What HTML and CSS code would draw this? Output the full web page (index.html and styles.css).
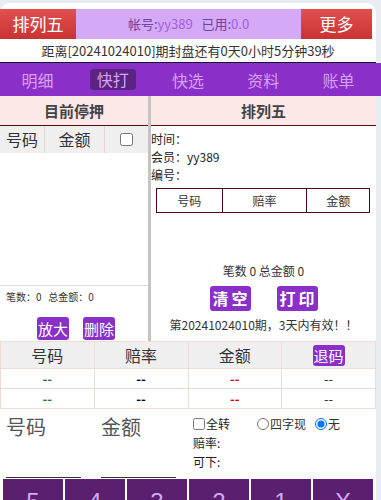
FILE: index.html
```html
<!DOCTYPE html>
<html lang="zh">
<head>
    <meta charset="UTF-8">
    <meta name="viewport" content="width=device-width, initial-scale=1.0">
    <title>排列五 快打</title>
    <link rel="stylesheet" href="styles.css">
</head>
<body>
    <div class="app">
        <!-- 顶部栏 -->
        <div class="top-bar">
            <div class="red-btn">排列五</div>
            <div class="account">帐号:<span>yy389</span>&nbsp;&nbsp;&nbsp;已用:<span>0.0</span></div>
            <div class="red-btn">更多</div>
        </div>
        <div class="countdown">距离[20241024010]期封盘还有0天0小时5分钟39秒</div>

        <!-- 导航 -->
        <div class="nav">
            <div class="nav-item">明细</div>
            <div class="nav-item"><span class="active">快打</span></div>
            <div class="nav-item">快选</div>
            <div class="nav-item">资料</div>
            <div class="nav-item">账单</div>
        </div>

        <!-- 双列 -->
        <div class="dual">
            <div class="left-col">
                <div class="col-header">目前停押</div>
                <div class="bet-head">
                    <div class="c1">号码</div>
                    <div class="c2">金额</div>
                    <div class="c3"><input type="checkbox"></div>
                </div>
                <div class="bet-body"></div>
                <div class="left-stats">笔数：0 &nbsp;&nbsp;总金额：0</div>
                <div class="left-btns">
                    <span class="p-btn">放大</span>
                    <span class="p-btn">删除</span>
                </div>
            </div>
            <div class="right-col">
                <div class="col-header">排列五</div>
                <div class="info">
                    <p>时间：</p>
                    <p>会员：yy389</p>
                    <p>编号：</p>
                </div>
                <table class="ticket">
                    <tr><td class="t1">号码</td><td class="t2">赔率</td><td class="t3">金额</td></tr>
                </table>
                <div class="right-stats">笔数 0 总金额 0</div>
                <div class="right-btns">
                    <span class="big-btn">清空</span>
                    <span class="big-btn">打印</span>
                </div>
                <div class="notice">第20241024010期，3天内有效！！</div>
            </div>
        </div>

        <!-- 下注列表 -->
        <table class="odds">
            <tr class="head"><td>号码</td><td>赔率</td><td>金额</td><td><span class="p-btn">退码</span></td></tr>
            <tr><td class="green">--</td><td class="black">--</td><td class="red">--</td><td class="plain">--</td></tr>
            <tr><td class="green">--</td><td class="black">--</td><td class="red">--</td><td class="plain">--</td></tr>
        </table>

        <!-- 输入区 -->
        <div class="entry">
            <div class="field">
                <div class="field-label">号码</div>
                <div class="field-line"></div>
            </div>
            <div class="field">
                <div class="field-label">金额</div>
                <div class="field-line"></div>
            </div>
            <div class="options">
                <label class="opt"><input type="checkbox">全转</label>
                <div class="opt-line">赔率:</div>
                <div class="opt-line">可下:</div>
            </div>
            <div class="radios">
                <label class="opt"><input type="radio" name="mode">四字现</label>
                <label class="opt"><input type="radio" name="mode" checked>无</label>
            </div>
        </div>

        <!-- 键盘 -->
        <div class="keypad">
            <div class="key">5</div>
            <div class="key">4</div>
            <div class="key">3</div>
            <div class="key">2</div>
            <div class="key">1</div>
            <div class="key">X</div>
        </div>
    </div>
</body>
</html>
```

FILE: styles.css
```css
/* 全局 */
body {
    margin: 0;
    background-color: #e9edf2;
    font-family: 'Noto Sans CJK SC', 'Liberation Sans', sans-serif;
    color: #333;
    overflow: hidden;
}

.app {
    width: 376px;
    margin-top: 3px;
    padding-top: 6px;
    background: white;
    border-radius: 10px 10px 0 0;
}

/* 顶部栏 */
.top-bar {
    display: flex;
    height: 30px;
    margin-right: 4px;
}

.red-btn {
    width: 76px;
    background: linear-gradient(#e25050, #c93232);
    color: white;
    font-size: 17px;
    line-height: 30px;
    text-align: center;
}

.top-bar .red-btn:last-child {
    width: 71px;
}

.account {
    flex: 1;
    background-color: #d4a9f5;
    color: #7242a0;
    font-size: 13px;
    line-height: 30px;
    text-align: center;
}

.account span {
    color: #a65ae8;
}

.countdown {
    height: 23px;
    line-height: 23px;
    font-size: 13px;
    text-align: center;
    color: #333;
    border-bottom: 1px solid #1a1030;
}

/* 导航 */
.nav {
    display: flex;
    height: 33px;
    background-color: #8a2fc8;
    margin-right: -5px;
    padding-right: 5px;
}

.nav-item {
    flex: 1;
    display: flex;
    justify-content: center;
    align-items: center;
    color: #d5a3f3;
    font-size: 16px;
}

.nav-item .active {
    background-color: #5b2482;
    border-radius: 4px;
    padding: 0 7px;
    line-height: 21px;
}

/* 双列 */
.dual {
    display: flex;
    height: 245px;
}

.left-col {
    width: 148px;
    border-right: 3px solid #c4c4c4;
    display: flex;
    flex-direction: column;
}

.right-col {
    flex: 1;
    display: flex;
    flex-direction: column;
}

.col-header {
    height: 29px;
    line-height: 29px;
    background-color: #fde8e8;
    border-bottom: 1px solid #5a0a0a;
    text-align: center;
    font-weight: bold;
    font-size: 15px;
    color: #444;
}

.bet-head {
    display: flex;
    height: 27px;
    background-color: #efefef;
    font-size: 16px;
    line-height: 27px;
    text-align: center;
}

.bet-head .c1 {
    width: 44px;
    border-right: 1px solid #e6d8d0;
}

.bet-head .c2 {
    width: 59px;
    border-right: 1px solid #e6d8d0;
}

.bet-head .c3 {
    flex: 1;
    display: flex;
    justify-content: center;
    align-items: center;
}

.bet-head input {
    margin: 0;
}

.bet-body {
    height: 132px;
    border-bottom: 1px solid #ddd;
}

.left-stats {
    font-size: 10px;
    padding-left: 6px;
    line-height: 22px;
    height: 24px;
}

.left-btns {
    display: flex;
    gap: 14px;
    padding-left: 37px;
    margin-top: 7px;
}

.p-btn {
    display: inline-block;
    background-color: #8a2fc8;
    color: white;
    font-size: 15px;
    line-height: 23px;
    padding: 0 1px;
    border-radius: 3px;
}

.info {
    padding-top: 4px;
    font-size: 12px;
    color: #222;
}

.info p {
    margin: 0;
    line-height: 18px;
}

.ticket {
    margin: 4px 6px 0 5px;
    border-collapse: collapse;
    font-size: 12px;
    text-align: center;
}

.ticket td {
    border: 1px solid #4a0a14;
    height: 23px;
    padding: 0;
}

.ticket .t1 { width: 65px; }
.ticket .t2 { width: 84px; }
.ticket .t3 { width: 62px; }

.right-stats {
    margin-top: 50px;
    font-size: 12px;
    text-align: center;
    line-height: 16px;
}

.right-btns {
    display: flex;
    justify-content: center;
    gap: 26px;
    margin-top: 7px;
}

.big-btn {
    background-color: #8a2fc8;
    color: white;
    font-weight: bold;
    font-size: 16px;
    letter-spacing: 3px;
    line-height: 25px;
    width: 41px;
    text-indent: 3px;
    text-align: center;
    border-radius: 3px;
}

.notice {
    margin-top: 5px;
    font-size: 12px;
    text-align: center;
    line-height: 17px;
}

/* 下注列表 */
.odds {
    width: 376px;
    border-collapse: collapse;
    text-align: center;
    table-layout: fixed;
}

.odds td {
    border: 1px solid #f0dcd2;
    padding: 0;
    height: 19px;
    font-size: 13px;
}

.odds .head td {
    background-color: #efefef;
    height: 26px;
    font-size: 16px;
}

.odds .head .p-btn {
    font-size: 15px;
    line-height: 21px;
}

.odds .green { color: #2a7a2a; font-weight: bold; }
.odds .black { color: #000; font-weight: bold; }
.odds .red { color: #d01010; font-weight: bold; }
.odds .plain { color: #333; }

/* 输入区 */
.entry {
    display: flex;
    height: 70px;
}

.field {
    width: 75px;
    margin-left: 6px;
    margin-right: 14px;
}

.field-label {
    font-size: 20px;
    color: #555;
    line-height: 28px;
    margin-top: 4px;
    height: 33px;
}

.field-line {
    border-bottom: 1px solid #333;
    height: 31px;
}

.options {
    margin-left: 3px;
    width: 64px;
    padding-top: 6px;
    font-size: 12px;
    color: #222;
}

.opt {
    display: flex;
    align-items: center;
    font-size: 12px;
    line-height: 18px;
}

.opt input {
    margin: 0 1px 0 0;
    width: 12px;
    height: 12px;
}

.opt-line {
    line-height: 19px;
}

.radios {
    display: flex;
    gap: 9px;
    padding-top: 6px;
    height: 18px;
}

/* 键盘 */
.keypad {
    display: flex;
    gap: 2px;
    padding-left: 3px;
}

.key {
    width: 60px;
    height: 45px;
    background-color: #5a1f6e;
    color: #d3a8f2;
    font-size: 24px;
    line-height: 45px;
    text-align: center;
    font-family: 'Liberation Sans', sans-serif;
}
```
